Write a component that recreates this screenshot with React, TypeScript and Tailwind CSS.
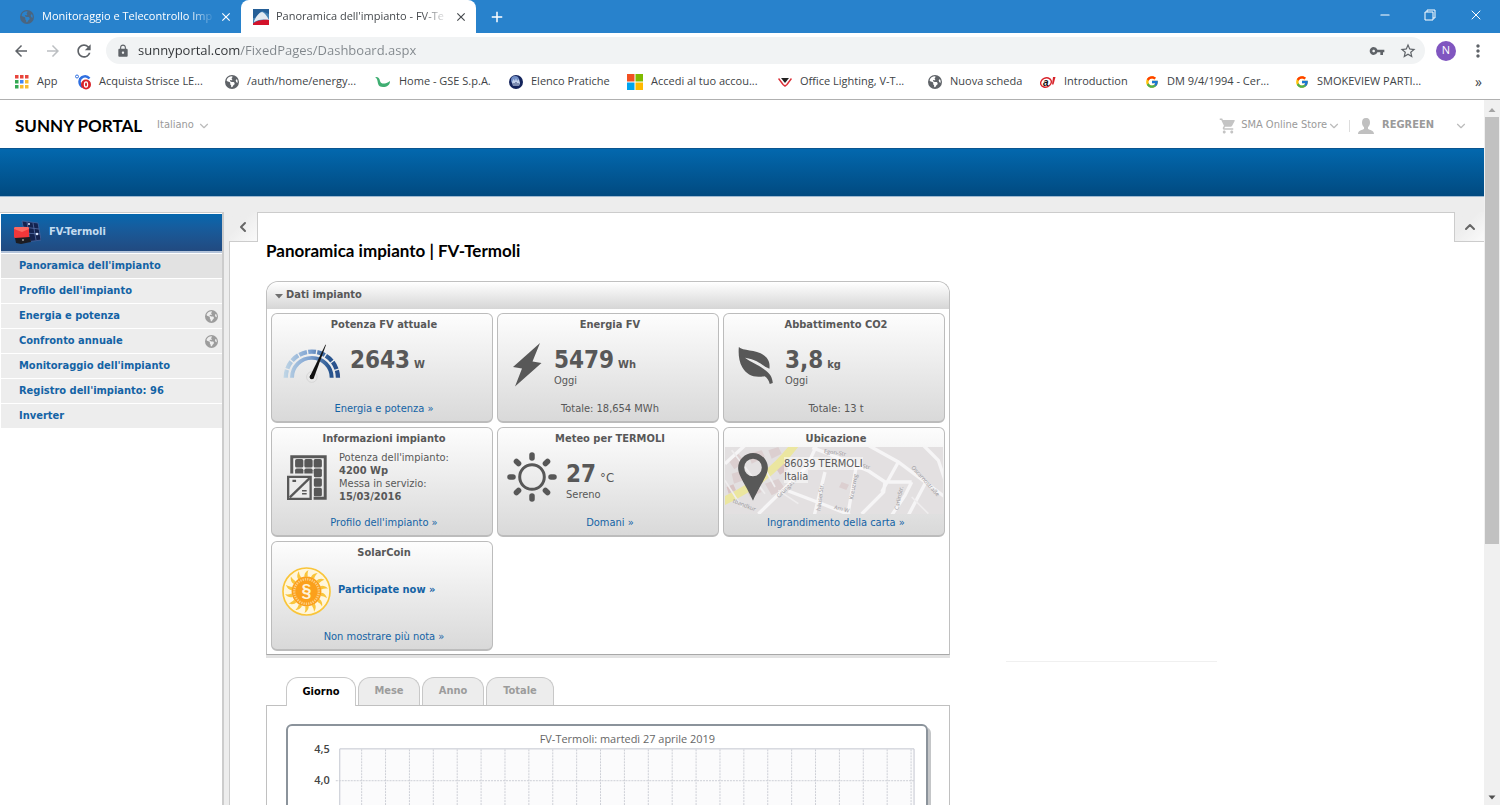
import type { ReactNode } from 'react';
import { ChevronDown, ChevronLeft, ChevronUp, Minus, X } from 'lucide-react';
import { FaEarthAmericas } from 'react-icons/fa6';
import { FcGoogle } from 'react-icons/fc';
import {
  MdAdd,
  MdArrowBack,
  MdArrowForward,
  MdClose,
  MdLock,
  MdMoreVert,
  MdRefresh,
  MdShoppingCart,
  MdStarBorder,
  MdVpnKey,
} from 'react-icons/md';

/* ---------- small icons ---------- */

function SunnyIcon() {
  return (
    <svg viewBox="0 0 16 16" className="h-4 w-4 shrink-0">
      <rect width="16" height="16" fill="#4583b5" />
      <path d="M0 0h16v5L9 2 2 9H0z" fill="#255f97" />
      <path d="M1 12C4 6 7 3 9 3s5 4 7 8c-5-1-10-1-15 2z" fill="#e3eaf1" />
      <path d="M0 16v-1.500C5 11 10 10.500 16 11v5z" fill="#d3122a" />
    </svg>
  );
}

function AppsIcon() {
  const colors = ['#e8453c', '#e8453c', '#e8453c', '#34a853', '#4285f4', '#f9bb2d', '#34a853', '#f9bb2d', '#f9bb2d'];
  return (
    <svg viewBox="0 0 14 14" className="h-3.5 w-3.5 shrink-0">
      {colors.map((c, i) => (
        <rect key={i} x={(i % 3) * 5} y={Math.floor(i / 3) * 5} width="3.500" height="3.500" fill={c} />
      ))}
    </svg>
  );
}

function StripIcon() {
  return (
    <svg viewBox="0 0 16 16" className="h-4 w-4 shrink-0">
      <circle cx="2" cy="2.500" r="1.500" fill="none" stroke="#2f6fe0" />
      <path d="M4 4l2 2" stroke="#2f6fe0" />
      <path d="M14.500 4.500C11 .5 5 2.500 4.500 7.500c0 3 1.500 4.500 3 5.500" fill="none" stroke="#2f6fe0" strokeWidth="2.500" />
      <circle cx="11" cy="10.500" r="5" fill="#d8232a" />
      <ellipse cx="11" cy="10.500" rx="1.600" ry="2.600" fill="none" stroke="#fff" strokeWidth="1.200" />
    </svg>
  );
}

function GseIcon() {
  return (
    <svg viewBox="0 0 16 16" className="h-4 w-4 shrink-0">
      <path d="M0 3c3-.5 4.500 1 5 4 .5 2 2 2.500 3.500 2.500 2 0 4-.5 6.500-2.500 0 4-3 6-7 6-4.500 0-5-3-5.500-6C2.200 5 1.500 4 0 3z" fill="#3fae72" />
    </svg>
  );
}

function EmblemIcon() {
  return (
    <svg viewBox="0 0 14 14" className="h-3.5 w-3.5 shrink-0">
      <circle cx="7" cy="7" r="7" fill="#14245c" />
      <circle cx="6" cy="5" r="4" fill="#6f8cc4" />
      <path d="M3 7l1.500-3L6 6l1-3 1 3 2-2 1 4-1 3H4z" fill="#c4d2ec" />
      <path d="M5 8v3M7 7v4M9 8v3" stroke="#14245c" strokeWidth=".8" />
    </svg>
  );
}

function MicrosoftIcon() {
  return (
    <svg viewBox="0 0 16 16" className="h-4 w-4 shrink-0">
      <path d="M0 0h7.500v7.500H0z" fill="#f25022" />
      <path d="M8.500 0H16v7.500H8.500z" fill="#7fba00" />
      <path d="M0 8.500h7.500V16H0z" fill="#00a4ef" />
      <path d="M8.500 8.500H16V16H8.500z" fill="#ffb900" />
    </svg>
  );
}

function VtacIcon() {
  return (
    <svg viewBox="0 0 14 14" className="h-3.5 w-3.5 shrink-0">
      <path d="M3 3h8L7 8z" fill="#222" />
      <path d="M.5 3.500 5 9.500l2 1.500 2-1.500 4.500-6" fill="none" stroke="#dc3038" strokeWidth="1.500" />
    </svg>
  );
}

function AlIcon() {
  return (
    <svg viewBox="0 0 16 14" className="h-3.5 w-4 shrink-0">
      <ellipse cx="6" cy="7.500" rx="5.500" ry="4.500" fill="none" stroke="#d8232a" strokeWidth="1.400" transform="rotate(-25 6 7.500)" />
      <text x="3" y="11" fontFamily="Liberation Sans" fontSize="10" fontWeight="700" fontStyle="italic" fill="#111">a</text>
      <path d="M12 9.500 13 2h2.500L13.500 9.500z" fill="#d8232a" />
    </svg>
  );
}

function PlantIcon() {
  return (
    <svg viewBox="0 0 28 26" className="h-[26px] w-7 shrink-0">
      <path d="M9 1 25 3l3 17-15 2z" fill="#14234f" stroke="#4f6aa5" strokeWidth=".7" />
      <path d="M14 2l3 19M20 3l3 17M10 7l16 2M11 13l16 1" stroke="#5d78b2" strokeWidth=".7" />
      <circle cx="24" cy="14" r="1.300" fill="#dfe9ff" />
      <circle cx="16" cy="4" r="1" fill="#dfe9ff" />
      <rect x="1" y="7" width="15" height="11" rx="1.500" fill="#f0373a" />
      <path d="M1 9c0-2 1-2 2-2h11c1 0 2 0 2 2l-7 3z" fill="#fa6a63" />
      <path d="M2 18l15-1 1 5-10 2-5-1z" fill="#1c1c22" />
      <circle cx="10" cy="20" r="1" fill="#999" />
    </svg>
  );
}

/* ---------- tile icons ---------- */

function GaugeIcon() {
  return (
    <svg viewBox="0 0 178 118" className="h-[39px] w-[59px]">
      <defs>
        <linearGradient id="gauge" gradientUnits="userSpaceOnUse" x1="0" y1="0" x2="176" y2="0">
          <stop offset="0" stopColor="#c3d8e6" />
          <stop offset=".45" stopColor="#7fa3d2" />
          <stop offset=".8" stopColor="#28558f" />
          <stop offset="1" stopColor="#2d4f8a" />
        </linearGradient>
      </defs>
      <path d="M8 102A79 79 0 0 1 166 102" fill="none" stroke="url(#gauge)" strokeWidth="13" strokeDasharray="24 4" />
      <path d="M27 102A60 60 0 0 1 147 102" fill="none" stroke="url(#gauge)" strokeWidth="12" />
      <circle cx="87" cy="100" r="16" fill="#e8e8e8" stroke="#cfcfcf" strokeWidth="2" />
      <path d="M81 98 128 2h2L93 103z" fill="#111" />
      <circle cx="87" cy="100" r="7" fill="#111" />
    </svg>
  );
}

function BoltIcon() {
  return (
    <svg viewBox="0 0 29 44" className="h-11 w-[29px]">
      <path d="M27 0 0 24l9 1.500-7 18L28.500 20l-9-1.500z" fill="#585858" />
    </svg>
  );
}

function LeafIcon() {
  return (
    <svg viewBox="0 0 102 109" className="h-[37px] w-[35px]">
      <path
        d="M2 0C14 14 60 4 84 32c9 12 9 22 8 32-20-6-30-26-72-32 22 16 40 20 62 38 12 10 18 18 20 36l-9 3c-3-12-8-18-15-23C48 92 26 84 12 60 2 42 0 20 2 0z"
        fill="#585858"
      />
    </svg>
  );
}

function PanelIcon() {
  const cells = [];
  for (let row = 0; row < 4; row++) {
    for (let col = 0; col < 3; col++) {
      cells.push(<rect key={`${row}-${col}`} x={24 + col * 28} y={12 + row * 29} width="25" height="26" rx="5" fill="#585858" />);
    }
  }
  return (
    <svg viewBox="0 0 120 136" className="h-[45px] w-10">
      <path d="M14 5h101v126H14z" fill="none" stroke="#585858" strokeWidth="9" />
      {cells}
      <path d="M0 56h80v80H0z" fill="#e9e9e9" />
      <path d="M3 66h68v67H3z" fill="#ececec" stroke="#585858" strokeWidth="7" />
      <path d="M8 128 68 70" stroke="#585858" strokeWidth="7" />
      <path d="M16 78h11" stroke="#585858" strokeWidth="7" />
      <path d="M45 108h14M45 117h14" stroke="#585858" strokeWidth="5" />
    </svg>
  );
}

function SunIcon() {
  return (
    <svg viewBox="0 0 50 50" className="h-[50px] w-[50px]">
      <circle cx="25" cy="25" r="12.300" fill="none" stroke="#585858" strokeWidth="3" />
      {[0, 45, 90, 135, 180, 225, 270, 315].map((a) => (
        <path key={a} d="M25 3v3" stroke="#585858" strokeWidth="5.500" strokeLinecap="round" transform={`rotate(${a} 25 25)`} />
      ))}
    </svg>
  );
}

function PinIcon() {
  return (
    <svg viewBox="0 0 88 142" className="h-12 w-[30px]">
      <path
        d="M44 0c24 0 44 20 44 44 0 22-18 42-44 97C18 86 0 66 0 44 0 20 20 0 44 0zm0 17a26 26 0 1 0 0 52 26 26 0 0 0 0-52z"
        fill="#585858"
        fillRule="evenodd"
      />
    </svg>
  );
}

function CoinIcon() {
  const rays = Array.from({ length: 14 }, (_, i) => (i * 360) / 14);
  return (
    <svg viewBox="0 0 148 148" className="h-[49px] w-[49px]">
      <circle cx="74" cy="74" r="71" fill="#fff6dc" stroke="#f9c53a" strokeWidth="5" />
      {rays.map((a) => (
        <path key={a} d="M68 30C66 24 70 14 80 9c-3 8-3 13-2 20z" fill="#f9c53a" transform={`rotate(${a} 74 74)`} />
      ))}
      <circle cx="74" cy="74" r="45" fill="#fba01c" />
      <circle cx="74" cy="74" r="37" fill="none" stroke="#fccb7c" strokeWidth="7" strokeDasharray="4 3" />
      <circle cx="74" cy="74" r="30" fill="#fba01c" />
      <text x="74" y="90" textAnchor="middle" fontFamily="Liberation Sans" fontSize="54" fontWeight="700" fill="#fff3d6">§</text>
    </svg>
  );
}

function StreetMap() {
  return (
    <svg viewBox="0 0 655 201" preserveAspectRatio="xMinYMid slice" className="absolute inset-x-px top-[19px] h-[67px]">
      <rect width="700" height="201" fill="#e3e0e1" />
      <g fill="#dccfd0">
        <path d="M10 40l30-20 20 25-32 22zM70 20l40-10 10 20-40 20zM20 80l35-10 12 25-40 15zM130 10l30-10 10 20-30 15zM120 110l40-15 20 30-40 20zM60 120l30-15 20 30-35 15zM350 105l22 8-8 16-22-8z" />
        <path d="M5 120l20-8 8 18-22 10zM150 60l25-15 15 22-25 16z" fill="#d9c4c4" />
      </g>
      <path d="M212-10C160 60 90 120-10 165" fill="none" stroke="#ebe6a0" strokeWidth="24" />
      <g fill="none" stroke="#f6f5f6" strokeWidth="10">
        <path d="M0 50 60-5M100 201 245 60l30-65M262 2l68 26 102 45 48 32 80 0M190 132l110 42 75 30M300 75l-32 130M395 50l-26 150M480 105l-4 30-66 66M430-5l90 50 140 105M520 45l-50 90M595-5l45 45 20 60M560 105l-20 40-40 60M600 110l-50 95" />
      </g>
      <g fill="none" stroke="#efedee" strokeWidth="5">
        <path d="M60 60l60 80M100 30l50 90M0 100l50 80M160 130l60 40M20 10l70 90M560 150l50 50" />
      </g>
      <g fontFamily="Open Sans, sans-serif" fontSize="17" fill="#98969a">
        <text transform="translate(296 18) rotate(8)">Egon-Str</text>
        <text transform="translate(162 154) rotate(-45)">Grüngasse</text>
        <text transform="translate(286 192) rotate(-83)">häuserStr.</text>
        <text transform="translate(384 158) rotate(-80)">Kreuzweg</text>
        <text transform="translate(520 190) rotate(-78)">CarlinStr.</text>
        <text transform="translate(558 62) rotate(48)">Oscarnostraße</text>
        <text transform="translate(326 186) rotate(14)">Am W</text>
        <text transform="translate(22 166) rotate(22)">tbandkur</text>
        <text transform="translate(412 62) rotate(14)">Str</text>
      </g>
    </svg>
  );
}

/* ---------- browser chrome ---------- */

const bookmarks: { label: string; icon: ReactNode; width: string }[] = [
  { label: 'App', icon: <AppsIcon />, width: 'w-[60px]' },
  { label: 'Acquista Strisce LE...', icon: <StripIcon />, width: 'w-[150px]' },
  { label: '/auth/home/energy...', icon: <FaEarthAmericas className="h-3.5 w-3.5 shrink-0 text-[#5f6368]" />, width: 'w-[150px]' },
  { label: 'Home - GSE S.p.A.', icon: <GseIcon />, width: 'w-[134px]' },
  { label: 'Elenco Pratiche', icon: <EmblemIcon />, width: 'w-[118px]' },
  { label: 'Accedi al tuo accou...', icon: <MicrosoftIcon />, width: 'w-[151px]' },
  { label: 'Office Lighting, V-T...', icon: <VtacIcon />, width: 'w-[150px]' },
  { label: 'Nuova scheda', icon: <FaEarthAmericas className="h-3.5 w-3.5 shrink-0 text-[#5f6368]" />, width: 'w-[112px]' },
  { label: 'Introduction', icon: <AlIcon />, width: 'w-[105px]' },
  { label: 'DM 9/4/1994 - Cer...', icon: <FcGoogle className="h-3.5 w-3.5 shrink-0" />, width: 'w-[150px]' },
  { label: 'SMOKEVIEW PARTI...', icon: <FcGoogle className="h-3.5 w-3.5 shrink-0" />, width: 'w-[150px]' },
];

function TabStrip() {
  return (
    <div className="flex h-[33px] shrink-0 items-end bg-[#2882cc]">
      <div className="flex h-full w-[241px] items-center pl-5 pr-2 text-white">
        <FaEarthAmericas className="h-3.5 w-3.5 shrink-0 text-[#4a6580]" />
        <span className="ml-2 flex-1 whitespace-nowrap text-[11px] [mask-image:linear-gradient(90deg,#000_85%,transparent)]">
          Monitoraggio e Telecontrollo Imp
        </span>
        <button aria-label="Chiudi scheda" className="ml-1">
          <MdClose className="h-3.5 w-3.5" />
        </button>
      </div>
      <div className="flex h-full w-[235px] items-center rounded-t-lg bg-white pl-3 pr-2 text-[#45494d]">
        <SunnyIcon />
        <span className="ml-[7px] flex-1 whitespace-nowrap text-[11px] [mask-image:linear-gradient(90deg,#000_85%,transparent)]">
          Panoramica dell'impianto - FV-Te
        </span>
        <button aria-label="Chiudi scheda" className="ml-1.5">
          <MdClose className="h-3.5 w-3.5" />
        </button>
      </div>
      <button aria-label="Nuova scheda" className="ml-3 flex h-full items-center text-white">
        <MdAdd className="h-[18px] w-[18px]" />
      </button>
      <div className="ml-auto flex h-[29px] items-center gap-8 self-start pr-4 text-white">
        <button aria-label="Riduci a icona">
          <Minus className="h-3.5 w-3.5" strokeWidth={2} />
        </button>
        <button aria-label="Ripristina">
          <svg viewBox="0 0 12 12" className="h-3 w-3" fill="none" stroke="currentColor">
            <path d="M1 3h8v8H1zM3 3V1h8v8H9" />
          </svg>
        </button>
        <button aria-label="Chiudi">
          <X className="h-4 w-4" strokeWidth={1.5} />
        </button>
      </div>
    </div>
  );
}

function Toolbar() {
  return (
    <div className="flex h-[35px] shrink-0 items-center bg-white pl-3 pr-3 text-[#5f6368]">
      <button aria-label="Indietro">
        <MdArrowBack className="h-[18px] w-[18px]" />
      </button>
      <button aria-label="Avanti" className="ml-3.5 text-[#bcbfc2]">
        <MdArrowForward className="h-[18px] w-[18px]" />
      </button>
      <button aria-label="Ricarica" className="ml-3">
        <MdRefresh className="h-5 w-5" />
      </button>
      <label className="ml-3 flex h-[27px] flex-1 items-center rounded-full bg-[#f1f3f4] pl-2.5 pr-2">
        <MdLock className="h-3.5 w-3.5" />
        <input
          aria-label="Indirizzo"
          defaultValue="sunnyportal.com/FixedPages/Dashboard.aspx"
          className="ml-2 flex-1 bg-[linear-gradient(90deg,#303336_102px,#80868b_102px)] bg-clip-text text-[13px] text-transparent outline-none"
        />
        <button aria-label="Password">
          <MdVpnKey className="h-4 w-4" />
        </button>
        <button aria-label="Preferiti" className="ml-3.5">
          <MdStarBorder className="h-[18px] w-[18px]" />
        </button>
      </label>
      <button className="ml-[11px] flex h-5 w-5 items-center justify-center rounded-full bg-[#8056c0] text-[11px] text-white">N</button>
      <button aria-label="Menu" className="ml-3">
        <MdMoreVert className="h-5 w-5" />
      </button>
    </div>
  );
}

function BookmarkBar() {
  return (
    <nav className="flex h-8 shrink-0 items-center border-b border-[#b0b0b0] bg-white pb-1 pl-[15px] pr-[18px] text-[11px] text-[#404346]">
      {bookmarks.map((b) => (
        <a key={b.label} href="#" className={`flex shrink-0 items-center gap-2 whitespace-nowrap ${b.width}`}>
          {b.icon}
          {b.label}
        </a>
      ))}
      <button className="ml-auto text-sm">»</button>
    </nav>
  );
}

function Scrollbar() {
  return (
    <div className="flex w-4 shrink-0 flex-col items-center bg-[#f0f0f0]">
      <svg viewBox="0 0 16 16" className="h-[17px] w-4">
        <path d="M4.500 11.500 8 7.500l3.500 4z" fill="#a3a3a3" />
      </svg>
      <div className="h-[427px] w-3.5 bg-[#c1c1c1]" />
      <svg viewBox="0 0 16 16" className="mt-auto h-4 w-4">
        <path d="M4.500 6.500 8 10.500l3.500-4z" fill="#505050" />
      </svg>
    </div>
  );
}

/* ---------- portal ---------- */

function PortalHeader() {
  return (
    <header className="flex h-12 shrink-0 items-center bg-white pl-[15px] pr-4 pt-[3px] text-[11px] text-[#9a9a9a]">
      <div className="font-[Lato,sans-serif] text-[17px] font-bold text-black">SUNNY PORTAL</div>
      <label className="ml-[15px] flex items-center">
        <select aria-label="Lingua" className="w-10 appearance-none bg-transparent outline-none">
          <option>Italiano</option>
        </select>
        <ChevronDown className="h-3.5 w-3.5 text-[#bbb]" />
      </label>
      <button className="ml-auto flex items-center">
        <MdShoppingCart className="h-[18px] w-[18px] text-[#c4c4c4]" />
        <span className="ml-1">SMA Online Store</span>
        <ChevronDown className="h-3.5 w-3.5 text-[#bbb]" />
      </button>
      <span className="mx-2 h-3 w-px bg-[#ddd]" />
      <button className="flex items-center font-bold">
        <svg viewBox="0 0 16 16" className="h-4 w-4">
          <path d="M8 0c3 0 4 2 4 4.500 0 2-.8 3.800-2 4.700V11c1.500 1 6 1 6 5H0c0-4 4.500-4 6-5V9.200C4.800 8.300 4 6.500 4 4.500 4 2 5 0 8 0z" fill="#c0c0c0" />
        </svg>
        <span className="ml-2">REGREEN</span>
        <ChevronDown className="ml-5 h-3.5 w-3.5 text-[#bbb]" />
      </button>
    </header>
  );
}

const menu = [
  { label: "Panoramica dell'impianto", active: true },
  { label: "Profilo dell'impianto" },
  { label: 'Energia e potenza', shared: true },
  { label: 'Confronto annuale', shared: true },
  { label: "Monitoraggio dell'impianto" },
  { label: "Registro dell'impianto: 96" },
  { label: 'Inverter' },
];

function Sidebar() {
  return (
    <aside className="mt-[15px] w-56 shrink-0 border-r-2 border-t border-[#ccc] bg-white">
      <div className="ml-px mt-px flex h-[39px] items-center border-b-2 border-[#b4c4da] bg-linear-to-b from-[#0467ae] to-[#214a80] pl-3 font-bold text-[#c4dcf0]">
        <PlantIcon />
        <span className="ml-2">FV-Termoli</span>
      </div>
      <nav className="ml-px mt-px">
        {menu.map((item) => (
          <a
            key={item.label}
            href="#"
            className={`flex h-[25px] items-center border-b border-white pl-[18px] pr-1 font-bold text-[#1463a5] ${
              item.active ? 'bg-[#e2e2e2]' : 'bg-[#ededed]'
            }`}
          >
            <span className="flex-1">{item.label}</span>
            {item.shared && <FaEarthAmericas className="h-[13px] w-[13px] text-[#9c9c9c]" />}
          </a>
        ))}
      </nav>
    </aside>
  );
}

function Tile({ title, icon, iconBox, children, footer, map }: {
  title: string;
  icon: ReactNode;
  iconBox: string;
  children: ReactNode;
  footer: ReactNode;
  map?: boolean;
}) {
  return (
    <section className="relative flex h-[110px] flex-col overflow-hidden rounded-md border border-b-2 border-[#bcbcbc] bg-linear-to-b from-[#fdfdfd] to-[#d9d9d9]">
      <h3 className="h-5 pl-1 text-center font-bold leading-[22px]">{title}</h3>
      {map && <StreetMap />}
      <div className="relative flex flex-1">
        <div className={`flex h-[58px] shrink-0 items-center ${iconBox}`}>{icon}</div>
        <div className="leading-[13px]">{children}</div>
      </div>
      <div className="relative h-[22px] pl-1 text-center leading-5">{footer}</div>
    </section>
  );
}

function Reading({ value, unit, note, thin }: { value: string; unit: string; note?: string; thin?: boolean }) {
  return (
    <div className="pt-3">
      <div className="flex h-7 items-baseline">
        <span className="text-2xl font-bold leading-7">{value}</span>
        <span className={thin ? 'ml-1 text-[13px]' : 'ml-1 font-bold'}>{unit}</span>
      </div>
      {note}
    </div>
  );
}

function Link({ children, bold }: { children: ReactNode; bold?: boolean }) {
  return (
    <a href="#" className={bold ? 'font-bold text-[#1463a5]' : 'text-[#1463a5]'}>
      {children} »
    </a>
  );
}

function PlantData() {
  return (
    <section className="rounded-t-xl border border-[#c0c0c0] border-b-[#a8a8a8] pb-[3px] shadow-[0_3px_0_#e2e2e2]">
      <h2 className="flex h-[27px] items-center rounded-t-xl bg-linear-to-b from-white to-[#d6d6d6] pl-2 font-bold">
        <svg viewBox="0 0 8 8" className="mr-[3px] h-2 w-2">
          <path d="M0 2h8L4 6.500z" fill="#707070" />
        </svg>
        Dati impianto
      </h2>
      <div className="grid grid-cols-3 gap-1 px-1 pt-1">
        <Tile title="Potenza FV attuale" icon={<GaugeIcon />} iconBox="w-[78px] pl-[11px]" footer={<Link>Energia e potenza</Link>}>
          <Reading value="2643" unit="W" />
        </Tile>
        <Tile title="Energia FV" icon={<BoltIcon />} iconBox="w-14 pl-[15px] pt-1" footer="Totale: 18,654 MWh">
          <Reading value="5479" unit="Wh" note="Oggi" />
        </Tile>
        <Tile title="Abbattimento CO2" icon={<LeafIcon />} iconBox="w-[61px] pl-3.5 pt-1" footer="Totale: 13 t">
          <Reading value="3,8" unit="kg" note="Oggi" />
        </Tile>
        <Tile title="Informazioni impianto" icon={<PanelIcon />} iconBox="w-[67px] pl-[15px]" footer={<Link>Profilo dell'impianto</Link>}>
          <dl className="pt-[3px]">
            <dt>Potenza dell'impianto:</dt>
            <dd className="font-bold">4200 Wp</dd>
            <dt>Messa in servizio:</dt>
            <dd className="font-bold">15/03/2016</dd>
          </dl>
        </Tile>
        <Tile title="Meteo per TERMOLI" icon={<SunIcon />} iconBox="w-[68px] pl-[9px]" footer={<Link>Domani</Link>}>
          <Reading value="27" unit="°C" note="Sereno" thin />
        </Tile>
        <Tile title="Ubicazione" icon={<PinIcon />} iconBox="w-[60px] pl-3.5" footer={<Link>Ingrandimento della carta</Link>} map>
          <address className="pt-[9px] not-italic">
            <span className="bg-white/50">86039 TERMOLI</span>
            <br />
            <span className="bg-white/50">Italia</span>
          </address>
        </Tile>
        <Tile title="SolarCoin" icon={<CoinIcon />} iconBox="w-[66px] pl-2.5" footer={<Link>Non mostrare più nota</Link>}>
          <div className="pt-[21px]">
            <Link bold>Participate now</Link>
          </div>
        </Tile>
      </div>
    </section>
  );
}

const periods = [
  { label: 'Giorno', width: 'w-[70px]', active: true },
  { label: 'Mese', width: 'w-[62px]' },
  { label: 'Anno', width: 'w-[62px]' },
  { label: 'Totale', width: 'w-[68px]' },
];

function DayChart() {
  const lines = Array.from({ length: 24 }, (_, i) => 74 + i * 24);
  return (
    <svg viewBox="0 0 641 200" className="block h-[200px] w-full" fontFamily="Open Sans, sans-serif">
      <text x="341" y="17" textAnchor="middle" fontSize="11" fill="#666">FV-Termoli: martedì 27 aprile 2019</text>
      <path d="M52 200V22.500h577V200" fill="#fbfbfc" stroke="#c3c6d0" />
      <g stroke="#cdcfd6" strokeDasharray="2 1">
        {lines.map((x) => (
          <path key={x} d={`M${x} 23V200`} />
        ))}
        <path d="M48 54.500H629" />
      </g>
      <g fontSize="11" fontWeight="600" fill="#444" textAnchor="end">
        <text x="42" y="27">4,5</text>
        <text x="42" y="58">4,0</text>
      </g>
    </svg>
  );
}

function EnergyPanel() {
  return (
    <section className="mt-[22px]">
      <div className="flex gap-0.5 pl-5">
        {periods.map((p) => (
          <button
            key={p.label}
            className={`h-7 rounded-t-xl border border-b-0 border-[#c8c8c8] font-bold ${p.width} ${
              p.active ? 'relative -mb-px h-[29px] bg-white text-black' : 'bg-[#ededed] text-[#9c9c9c]'
            }`}
          >
            {p.label}
          </button>
        ))}
      </div>
      <div className="border border-[#c0c0c0] px-[19px] pt-[18px]">
        <div className="mr-0.5 rounded-md border-2 border-[#8b939b] shadow-[3px_3px_0_#c4c6c8]">
          <DayChart />
        </div>
      </div>
    </section>
  );
}

function CornerButton({ label, className, children }: { label: string; className: string; children: ReactNode }) {
  return (
    <button
      aria-label={label}
      className={`-mt-px flex h-[30px] items-center justify-center border-b border-[#ccc] bg-linear-to-br from-[#ededed] from-40% to-[#fafafa] text-[#666] ${className}`}
    >
      {children}
    </button>
  );
}

export default function App() {
  return (
    <div className="flex h-screen flex-col overflow-hidden bg-white font-['Open_Sans',sans-serif]">
      <TabStrip />
      <Toolbar />
      <BookmarkBar />
      <div className="flex min-h-0 flex-1">
        <div className="flex min-w-0 flex-1 flex-col overflow-hidden bg-[#ededed] font-['DejaVu_Sans_Condensed','DejaVu_Sans',sans-serif] text-[11px] text-[#585858]">
          <PortalHeader />
          <div className="h-[49px] shrink-0 border-b border-t border-b-[#9db8d0] border-t-[#0a5590] bg-linear-to-b from-[#0368ae] to-[#014a80]" />
          <div className="flex min-h-0 flex-1">
            <Sidebar />
            <main className="ml-[5px] mt-[15px] flex min-w-0 flex-1 border-l border-t border-[#ccc] bg-white">
              <CornerButton label="Nascondi menu" className="-ml-px w-[29px] border-r">
                <ChevronLeft className="h-4 w-4" strokeWidth={3} />
              </CornerButton>
              <div className="ml-2 w-full max-w-[684px] pt-7">
                <h1 className="h-10 font-[Lato,sans-serif] text-[17px] font-bold leading-5 text-black">
                  Panoramica impianto | FV-Termoli
                </h1>
                <PlantData />
                <EnergyPanel />
              </div>
              <hr className="ml-14 mt-[448px] w-[211px] border-[#f0f0f0]" />
              <CornerButton label="Comprimi" className="ml-auto w-[30px] border-l">
                <ChevronUp className="h-4 w-4" strokeWidth={3} />
              </CornerButton>
            </main>
          </div>
        </div>
        <Scrollbar />
      </div>
    </div>
  );
}
